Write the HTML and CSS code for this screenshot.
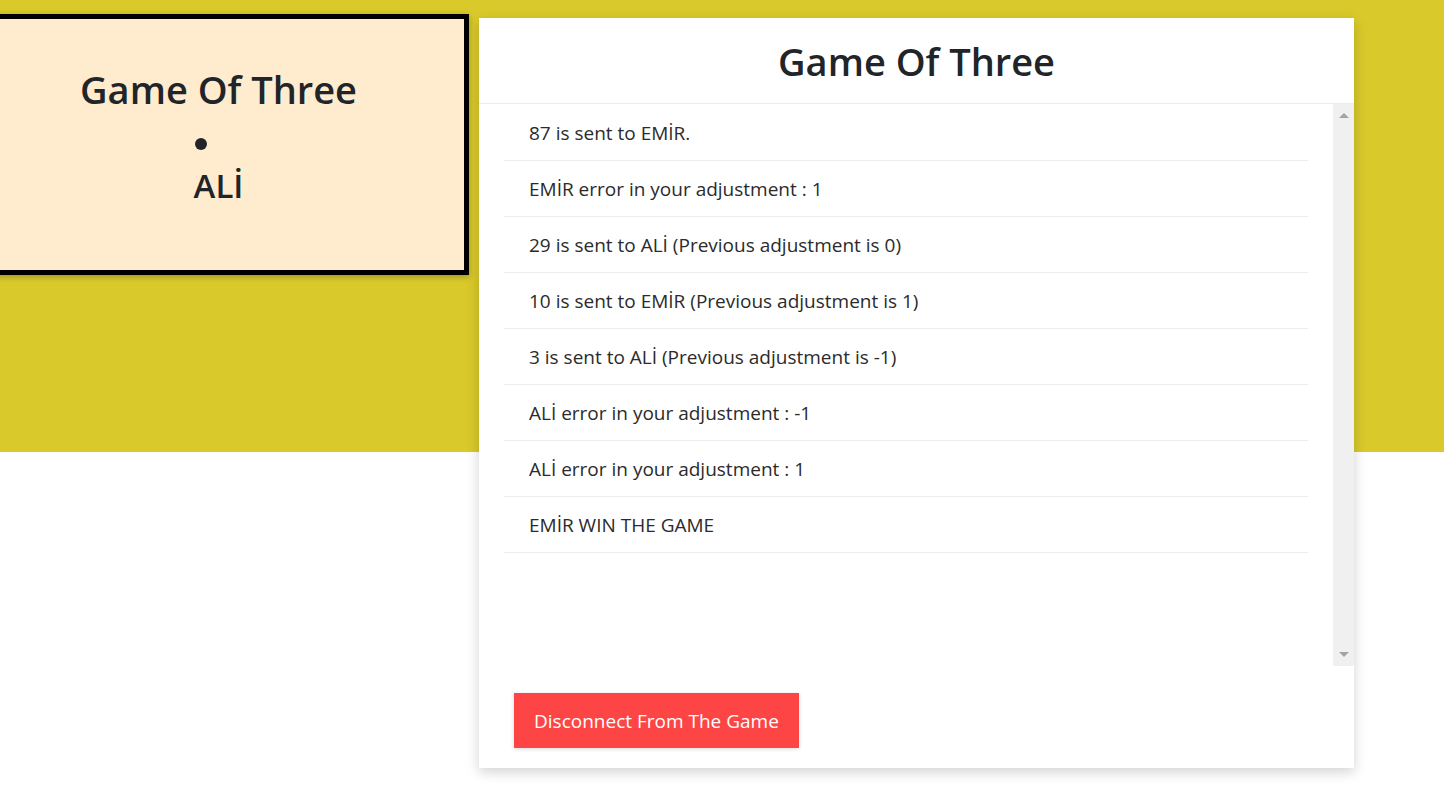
FILE: index.html
```html
<!DOCTYPE html>
<html lang="tr">
<head>
<meta charset="utf-8">
<title>Game Of Three</title>
<link rel="stylesheet" href="styles.css">
</head>
<body>
<main class="page">
  <section class="player-card">
    <h1 class="card-title">Game Of Three</h1>
    <div class="player">
      <span class="dot"></span>
      <h2 class="player-name">ALİ</h2>
    </div>
  </section>
  <section class="game-panel">
    <header class="panel-header">
      <h1 class="panel-title">Game Of Three</h1>
    </header>
    <div class="log-area">
      <ul class="log-list">
        <li class="log-item">87 is sent to EMİR.</li>
        <li class="log-item">EMİR error in your adjustment : 1</li>
        <li class="log-item">29 is sent to ALİ (Previous adjustment is 0)</li>
        <li class="log-item">10 is sent to EMİR (Previous adjustment is 1)</li>
        <li class="log-item">3 is sent to ALİ (Previous adjustment is -1)</li>
        <li class="log-item">ALİ error in your adjustment : -1</li>
        <li class="log-item">ALİ error in your adjustment : 1</li>
        <li class="log-item">EMİR WIN THE GAME</li>
      </ul>
      <div class="scrollbar">
        <span class="arrow up"></span>
        <span class="arrow down"></span>
      </div>
    </div>
    <div class="panel-footer">
      <button class="disconnect-btn" type="button">Disconnect From The Game</button>
    </div>
  </section>
</main>
</body>
</html>
```
FILE: styles.css
```css
* { box-sizing: border-box; }

html, body { margin: 0; padding: 0; }

body {
  font-family: "Open Sans", "Noto Sans", sans-serif;
  color: #212529;
  background: linear-gradient(to bottom, #d9c92a 0, #d9c92a 452px, #ffffff 452px);
  min-height: 800px;
  overflow: hidden;
}

.page {
  display: flex;
  align-items: flex-start;
  gap: 10px;
  padding-top: 14px;
}

.player-card {
  margin-left: -32px;
  width: 501px;
  height: 261px;
  background: #ffebcd;
  border: 5px solid #000;
  box-shadow: 0 2px 6px rgba(0, 0, 0, 0.25);
  display: flex;
  flex-direction: column;
  align-items: center;
  padding-top: 46px;
}

.card-title,
.panel-title {
  margin: 0;
  font-size: 38px;
  font-weight: 600;
  line-height: 48px;
}

.player {
  display: flex;
  flex-direction: column;
  align-items: center;
  margin-top: 25px;
}

.dot {
  width: 12px;
  height: 12px;
  border-radius: 50%;
  background: #212529;
  margin-right: 35px;
}

.player-name {
  margin: 16px 0 0;
  font-size: 33px;
  font-weight: 600;
  line-height: 40px;
}

.game-panel {
  margin-top: 4px;
  width: 875px;
  height: 750px;
  background: #fff;
  box-shadow: 0 4px 12px rgba(0, 0, 0, 0.18);
  display: flex;
  flex-direction: column;
}

.panel-header {
  height: 86px;
  border-bottom: 1px solid #ececec;
  display: flex;
  justify-content: center;
  padding-top: 19px;
}

.log-area {
  height: 562px;
  display: flex;
}

.log-list {
  flex: 1;
  list-style: none;
  margin: 0 25px;
  padding: 1px 0 0;
}

.log-item {
  height: 56px;
  padding: 0 25px;
  display: flex;
  align-items: center;
  font-size: 19px;
  color: #2b2b2b;
  border-bottom: 1px solid #ededed;
}

.scrollbar {
  width: 21px;
  background: #f0f0f0;
  display: flex;
  flex-direction: column;
  justify-content: space-between;
  align-items: center;
  padding: 9px 0;
}

.arrow {
  width: 0;
  height: 0;
  border-left: 5px solid transparent;
  border-right: 5px solid transparent;
}

.arrow.up { border-bottom: 5px solid #a3a3a3; }
.arrow.down { border-top: 5px solid #a3a3a3; }

.panel-footer {
  padding: 27px 35px 0;
}

.disconnect-btn {
  height: 55px;
  padding: 0 20px;
  border: none;
  border-radius: 0;
  background: #fe4545;
  color: #fff;
  font-family: inherit;
  font-size: 19px;
  box-shadow: 0 1px 4px rgba(0, 0, 0, 0.15);
  cursor: pointer;
}
```
